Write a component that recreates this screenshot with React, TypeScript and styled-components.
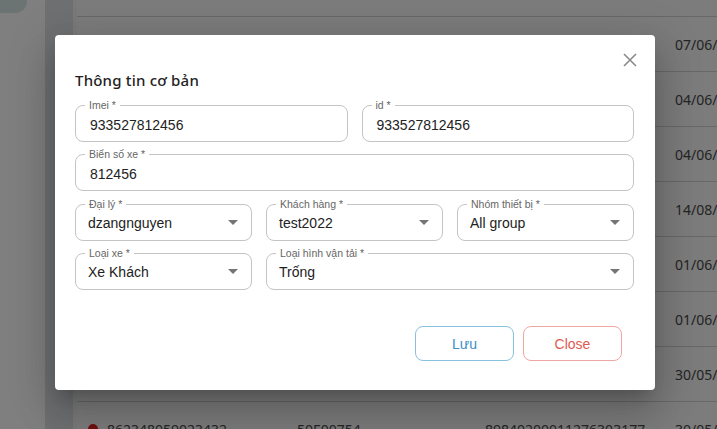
import React from "react";
import styled, { createGlobalStyle } from "styled-components";

const Global = createGlobalStyle`
  html, body { margin: 0; padding: 0; background: #ffffff; }
  body { font-family: "Liberation Sans", Arial, sans-serif; }
  * { box-sizing: border-box; }
`;

const Page = styled.div`
  position: relative;
  display: flex;
  width: 717px;
  height: 429px;
  overflow: hidden;
`;

const LeftRail = styled.div`
  width: 45px;
  flex: none;
  background: #fefefe;
`;

const LogoChip = styled.div`
  width: 27px;
  height: 13px;
  background: #d8e9e7;
  border-bottom-right-radius: 12px;
`;

const SideNav = styled.div`
  width: 32px;
  flex: none;
  background: #dfe0e5;
  border-right: 4px solid #f4f4f4;
`;

const TableArea = styled.div`
  flex: 1;
  display: flex;
  flex-direction: column;
  background: #f8f8f8;
`;

const HeaderStrip = styled.div`
  height: 17px;
  flex: none;
  border-bottom: 1px solid #d0d0d0;
`;

const Row = styled.div`
  height: 55px;
  flex: none;
  display: grid;
  grid-template-columns: 209px 188px 190px 1fr;
  align-items: center;
  padding-left: 11px;
  border-bottom: 1px solid #d0d0d0;
  font-family: "Noto Sans", "Open Sans", sans-serif;
  font-size: 14px;
  color: #4a4a4a;
  white-space: nowrap;
`;

const Cell = styled.div`
  display: flex;
  align-items: center;
  gap: 9px;
  overflow: hidden;
`;

const Dot = styled.span`
  width: 10px;
  height: 10px;
  border-radius: 50%;
  background: #e02020;
  flex: none;
`;

const Overlay = styled.div`
  position: absolute;
  inset: 0;
  background: rgba(0, 0, 0, 0.5);
  padding: 35px 0 0 55px;
`;

const Dialog = styled.div`
  position: relative;
  width: 600px;
  height: 355px;
  background: #fff;
  border-radius: 4px;
  box-shadow: 0 11px 15px -7px rgba(0,0,0,0.2), 0 24px 38px 3px rgba(0,0,0,0.14), 0 9px 46px 8px rgba(0,0,0,0.12);
  padding: 35px 21px 0 20px;
  display: flex;
  flex-direction: column;
`;

const CloseIcon = styled.button`
  position: absolute;
  top: 17px;
  right: 17px;
  width: 16px;
  height: 16px;
  padding: 0;
  border: none;
  background: none;
  display: flex;
  cursor: pointer;
`;

const Title = styled.h2`
  margin: 0 0 15px 0;
  font-family: "Noto Sans", "Open Sans", sans-serif;
  font-size: 15px;
  font-weight: 500;
  letter-spacing: 0.2px;
  line-height: 20px;
  color: #222;
`;

const FormGrid = styled.div`
  display: grid;
  grid-template-columns: repeat(6, 1fr);
  column-gap: 14px;
  row-gap: 12.3px;
`;

const Field = styled.div<{ $span: number }>`
  position: relative;
  grid-column: span ${(p) => p.$span};
  height: 37px;
  border: 1px solid #c4c4c4;
  border-radius: 8px;
  display: flex;
  align-items: center;
  padding: 0 14px;
`;

const Label = styled.span`
  position: absolute;
  top: -7px;
  left: 9px;
  padding: 0 4px 0 4px;
  background: #fff;
  font-size: 10.5px;
  line-height: 12px;
  color: #666;
  white-space: nowrap;
`;

const Value = styled.span<{ $select?: boolean }>`
  flex: 1;
  font-size: 14px;
  color: #222;
  margin-left: ${(p) => (p.$select ? "-2px" : "0")};
  margin-top: 2px;
`;

const Arrow = styled.svg`
  width: 24px;
  height: 24px;
  margin-right: -8px;
  flex: none;
`;

const Actions = styled.div`
  margin-top: auto;
  margin-bottom: 29px;
  padding-right: 12px;
  display: flex;
  justify-content: flex-end;
  gap: 9px;
`;

const ActionButton = styled.button<{ $tone: "save" | "close" }>`
  width: 99px;
  height: 35px;
  border-radius: 8px;
  background: #fff;
  border: 1px solid ${(p) => (p.$tone === "save" ? "#88c1df" : "#eea7a2")};
  color: ${(p) => (p.$tone === "save" ? "#3d8ec6" : "#df5a52")};
  font-family: "Liberation Sans", Arial, sans-serif;
  font-size: 14px;
  cursor: pointer;
`;

const rows = [
  ["862348059023411", "51B12345", "89840200011276303101", "07/06/2022"],
  ["862348059023412", "51B23456", "89840200011276303102", "04/06/2022"],
  ["862348059023413", "51B34567", "89840200011276303103", "04/06/2022"],
  ["862348059023414", "51B45678", "89840200011276303104", "14/08/2022"],
  ["862348059023415", "51B56789", "89840200011276303105", "01/06/2022"],
  ["862348059023416", "51B67890", "89840200011276303106", "01/06/2022"],
  ["862348059023417", "51B78901", "89840200011276303107", "30/05/2022"],
  ["862348059023432", "50E00754", "89840200011276303177", "30/05/2022"],
];

const DropArrow = () => (
  <Arrow viewBox="0 0 24 24">
    <path d="M7 10l5 5 5-5z" fill="rgba(0,0,0,0.54)" />
  </Arrow>
);

type FieldDef = { label: string; value: string; span: number; select?: boolean };

const fields: FieldDef[] = [
  { label: "Imei *", value: "933527812456", span: 3 },
  { label: "id *", value: "933527812456", span: 3 },
  { label: "Biển số xe *", value: "812456", span: 6 },
  { label: "Đại lý *", value: "dzangnguyen", span: 2, select: true },
  { label: "Khách hàng *", value: "test2022", span: 2, select: true },
  { label: "Nhóm thiết bị *", value: "All group", span: 2, select: true },
  { label: "Loại xe *", value: "Xe Khách", span: 2, select: true },
  { label: "Loại hình vận tải *", value: "Trống", span: 4, select: true },
];

export default function App() {
  return (
    <>
      <Global />
      <Page>
        <LeftRail>
          <LogoChip />
        </LeftRail>
        <SideNav />
        <TableArea>
          <HeaderStrip />
          {rows.map((r, i) => (
            <Row key={i}>
              <Cell>
                <Dot />
                {r[0]}
              </Cell>
              <Cell>{r[1]}</Cell>
              <Cell>{r[2]}</Cell>
              <Cell>{r[3]}</Cell>
            </Row>
          ))}
        </TableArea>
        <Overlay>
          <Dialog>
            <CloseIcon aria-label="close">
              <svg width="16" height="16" viewBox="0 0 16 16">
                <path d="M2 2L14 14M14 2L2 14" stroke="#8a8a8a" strokeWidth="1.6" fill="none" />
              </svg>
            </CloseIcon>
            <Title>Thông tin cơ bản</Title>
            <FormGrid>
              {fields.map((f) => (
                <Field key={f.label} $span={f.span}>
                  <Label>{f.label}</Label>
                  <Value $select={f.select}>{f.value}</Value>
                  {f.select && <DropArrow />}
                </Field>
              ))}
            </FormGrid>
            <Actions>
              <ActionButton $tone="save">Lưu</ActionButton>
              <ActionButton $tone="close">Close</ActionButton>
            </Actions>
          </Dialog>
        </Overlay>
      </Page>
    </>
  );
}
